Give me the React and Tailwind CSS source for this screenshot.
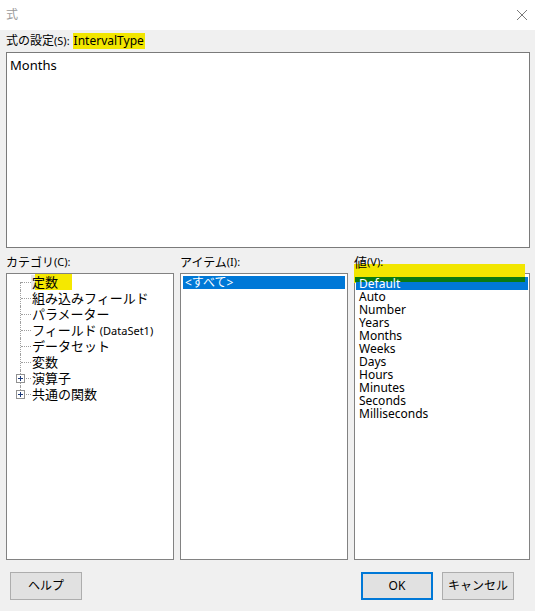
import React from 'react';

const font = { fontFamily: '"Noto Sans", "Noto Sans CJK JP", sans-serif' };

const treeItems = [
  { label: '定数', mark: true },
  { label: '組み込みフィールド' },
  { label: 'パラメーター' },
  { label: 'フィールド', extra: '(DataSet1)' },
  { label: 'データセット' },
  { label: '変数' },
  { label: '演算子', plus: true },
  { label: '共通の関数', plus: true },
];

const values = ['Default', 'Auto', 'Number', 'Years', 'Months', 'Weeks', 'Days', 'Hours', 'Minutes', 'Seconds', 'Milliseconds'];

const TreeRow = ({ item, first, last }) => (
  <div className="flex items-center h-[16px]">
    <div className="relative w-[24px] h-full shrink-0">
      {/* vertical connector */}
      <div
        className={`absolute left-[12px] border-l border-dotted border-[#a0a0a0] ${first ? 'top-[8px] bottom-0' : last ? 'top-0 h-[8px]' : 'top-0 bottom-0'}`}
      />
      {/* horizontal connector */}
      <div className="absolute left-[13px] top-[8px] w-[10px] border-t border-dotted border-[#a0a0a0]" />
      {item.plus && (
        <div className="absolute left-[8px] top-[4px] w-[9px] h-[9px] bg-white border border-[#919191] flex items-center justify-center">
          <div className="relative w-[5px] h-[5px]">
            <div className="absolute left-0 top-[2px] w-[5px] h-[1px] bg-[#1e3b7a]" />
            <div className="absolute left-[2px] top-0 w-[1px] h-[5px] bg-[#1e3b7a]" />
          </div>
        </div>
      )}
    </div>
    <div className="relative flex items-center h-full">
      {item.mark && (
        <>
          <div className="absolute left-[-1px] top-[1px] w-[36px] h-[15px] bg-[#e6e6e6]" />
          <div className="absolute left-[3px] top-0 w-[37px] h-[16px] bg-[#f5e800]" />
        </>
      )}
      <span className="relative text-[13px] leading-[16px] text-black whitespace-nowrap">
        {item.label}
        {item.extra && <span className="text-[11px] ml-[3px]">{item.extra}</span>}
      </span>
    </div>
  </div>
);

const Button = ({ children, primary }) => (
  <button
    className={`w-[72px] h-[28px] bg-[#e1e1e1] text-[12px] text-black flex items-center justify-center ${primary ? 'border-2 border-[#0078d7]' : 'border border-[#adadad]'}`}
  >
    {children}
  </button>
);

export default function App() {
  return (
    <div className="w-[535px] h-[611px] bg-[#f0f0f0] flex flex-col overflow-hidden" style={font}>
      {/* title bar */}
      <div className="h-[30px] bg-white flex items-center justify-between pl-[6px] pr-[7px] shrink-0">
        <span className="text-[12px] text-[#9a9a9a]">式</span>
        <svg width="12" height="12" viewBox="0 0 12 12">
          <path d="M1 1 L11 11 M11 1 L1 11" stroke="#7a7a7a" strokeWidth="1" fill="none" />
        </svg>
      </div>

      <div className="flex flex-col pl-[6px] pr-[5px] flex-1">
        {/* expression label */}
        <div className="h-[22px] flex items-center text-[12px] text-black">
          <span className="text-[12px]">式の設定</span>
          <span className="text-[11px]">(S):</span>
          <span className="ml-[3px] bg-[#f2e600] px-[1px] h-[16px] leading-[16px] text-[12px]">IntervalType</span>
        </div>

        {/* expression text */}
        <div className="h-[196px] bg-white border border-[#7a7a7a] pl-[3px] pt-[4px] text-[13px] leading-[16px] text-black">
          Months
        </div>

        {/* lists */}
        <div className="flex gap-[6px] mt-[1px]">
          <div className="w-[168px] flex flex-col">
            <div className="h-[24px] flex items-center pt-[3px] text-[12px] text-black">
              <span>カテゴリ</span>
              <span className="text-[11px]">(C):</span>
            </div>
            <div className="h-[287px] bg-white border border-[#828282] pl-[1px]">
              {treeItems.map((item, i) => (
                <TreeRow key={item.label} item={item} first={i === 0} last={i === treeItems.length - 1} />
              ))}
            </div>
          </div>

          <div className="w-[168px] flex flex-col">
            <div className="h-[24px] flex items-center pt-[3px] text-[12px] text-black">
              <span>アイテム</span>
              <span className="text-[11px]">(I):</span>
            </div>
            <div className="h-[287px] bg-white border border-[#828282] p-[2px]">
              <div className="h-[13px] bg-[#0078d7] text-white text-[12px] leading-[13px] pl-[2px]">&lt;すべて&gt;</div>
            </div>
          </div>

          <div className="w-[176px] flex flex-col relative">
            <div className="absolute left-0 top-[15px] w-[171px] h-[18px] bg-[#f2e600]" />
            <div className="relative h-[24px] flex items-center pt-[3px] text-[12px] text-black">
              <span className="text-[13px]">値</span>
              <span className="text-[11px]">(V):</span>
            </div>
            <div className="relative h-[287px] bg-white border border-[#828282] pt-[3px] pl-[1px] pr-[1px]">
              <div className="absolute left-[-1px] top-[-1px] w-[171px] h-[10px] bg-[#f2e600]" />
              <div className="relative">
                {values.map((v, i) => (
                  <div
                    key={v}
                    className={`relative h-[13px] text-[12px] leading-[13px] pl-[3px] ${i === 0 ? 'bg-[#0078d7] text-white' : 'text-black'}`}
                  >
                    {i === 0 && <div className="absolute left-[-1px] top-0 w-[170px] h-[5px] bg-[#0b7a12]" />}
                    <span className="relative">{v}</span>
                  </div>
                ))}
              </div>
            </div>
          </div>
        </div>

        {/* buttons */}
        <div className="flex items-center mt-[12px] pl-[4px] pr-[16px]">
          <Button>ヘルプ</Button>
          <div className="flex-1" />
          <Button primary>OK</Button>
          <div className="w-[9px]" />
          <Button>キャンセル</Button>
        </div>
      </div>
    </div>
  );
}
